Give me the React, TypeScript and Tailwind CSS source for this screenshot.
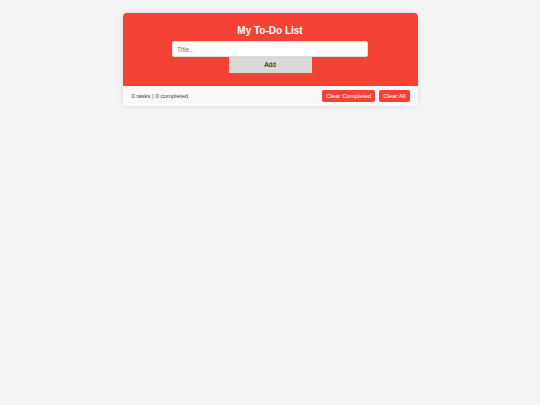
import { useState } from "react"

interface Task {
  id: number
  title: string
  done: boolean
}

export default function App() {
  const [title, setTitle] = useState("")
  const [tasks, setTasks] = useState<Task[]>([])

  const addTask = () => {
    if (!title.trim()) return
    setTasks([...tasks, { id: Date.now(), title: title.trim(), done: false }])
    setTitle("")
  }

  const completed = tasks.filter((t) => t.done).length

  return (
    <div className="min-h-screen bg-[#f4f4f4] pt-[13px] font-['Liberation_Sans',Arial,sans-serif]">
      <div className="mx-auto w-[295px] overflow-hidden rounded-[4px] bg-white shadow-[0_0_5px_rgba(0,0,0,0.12)]">
        {/* Header */}
        <div className="flex flex-col items-center bg-[#f44336] pt-[12px] pb-[13px]">
          <h2 className="mb-[4px] text-[10px] leading-[12px] font-bold text-white">My To-Do List</h2>
          <input
            value={title}
            onChange={(e) => setTitle(e.target.value)}
            placeholder="Title..."
            className="h-[16px] w-[196px] rounded-[2px] border border-[#ddd] bg-white px-[4px] text-[6.5px] text-black outline-none placeholder:text-[#757575]"
          />
          <button
            onClick={addTask}
            className="h-[16px] w-[83px] bg-[#d9d9d9] text-[6.5px] text-black"
          >
            Add
          </button>
        </div>

        {/* Task list */}
        {tasks.map((t) => (
          <div key={t.id} className="border-b border-[#eee] px-[9px] py-[4px] text-[6.5px]">
            {t.title}
          </div>
        ))}

        {/* Footer */}
        <div className="flex h-[20px] items-center justify-between bg-[#f9f9f9] pr-[8px] pl-[9px]">
          <span className="text-[6px] text-[#444]">
            {tasks.length} tasks | {completed} completed
          </span>
          <div className="flex gap-[4px]">
            <button
              onClick={() => setTasks(tasks.filter((t) => !t.done))}
              className="flex h-[12px] items-center rounded-[2px] bg-[#f44336] px-[4px] text-[6px] text-white"
            >
              Clear Completed
            </button>
            <button
              onClick={() => setTasks([])}
              className="flex h-[12px] items-center rounded-[2px] bg-[#f44336] px-[4px] text-[6px] text-white"
            >
              Clear All
            </button>
          </div>
        </div>
      </div>
    </div>
  )
}
